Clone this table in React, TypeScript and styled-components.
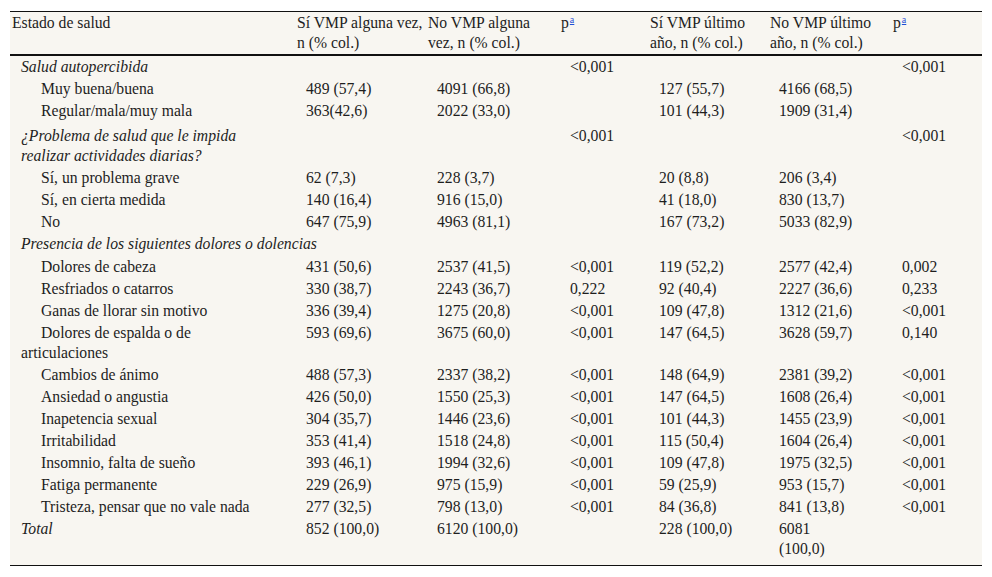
import React from "react";
import styled, { createGlobalStyle } from "styled-components";

const Global = createGlobalStyle`
  html, body { margin: 0; padding: 0; background: #ffffff; }
  body { font-family: "Liberation Serif", "Times New Roman", serif; color: #1e1e1e; }
`;

const Wrapper = styled.div`
  margin: 11px 10px 0 10px;
  background: #f8f6f1;
  border-top: 1px solid #111;
  border-bottom: 1px solid #111;
`;

const Table = styled.table`
  width: 100%;
  table-layout: fixed;
  border-collapse: collapse;
  font-size: 15.7px;
  line-height: 20px;
`;

const Head = styled.thead`
  border-bottom: 2px solid #111;
`;

const HeadCell = styled.th`
  text-align: left;
  font-weight: normal;
  vertical-align: top;
  padding: 1px 0 1px 2px;
  white-space: nowrap;
`;

const Sup = styled.sup`
  font-size: 10px;
  line-height: 0;
  vertical-align: 5px;
  margin-left: 1px;
`;

const RefLink = styled.a`
  color: #1f4fd6;
  text-decoration: underline;
`;

const Row = styled.tr<{ $padTop?: number; $padBottom?: number }>`
  & > td {
    padding-top: ${(p) => 1 + (p.$padTop ?? 0)}px;
    padding-bottom: ${(p) => 1 + (p.$padBottom ?? 0)}px;
  }
`;

const LabelCell = styled.td<{ $sub?: boolean; $italic?: boolean }>`
  vertical-align: top;
  padding-left: 11px;
  text-indent: ${(p) => (p.$sub ? "20px" : "0")};
  font-style: ${(p) => (p.$italic ? "italic" : "normal")};
  white-space: nowrap;
`;

const Cell = styled.td`
  vertical-align: top;
  padding-left: 11px;
  white-space: nowrap;
`;

type Line = {
  label: React.ReactNode;
  kind: "section" | "sub";
  values: string[];
  padTop?: number;
  padBottom?: number;
};

const rows: Line[] = [
  { label: "Salud autopercibida", kind: "section", values: ["", "", "<0,001", "", "", "<0,001"] },
  { label: "Muy buena/buena", kind: "sub", values: ["489 (57,4)", "4091 (66,8)", "", "127 (55,7)", "4166 (68,5)", ""] },
  { label: "Regular/mala/muy mala", kind: "sub", values: ["363(42,6)", "2022 (33,0)", "", "101 (44,3)", "1909 (31,4)", ""] },
  {
    label: (
      <>
        ¿Problema de salud que le impida
        <br />
        realizar actividades diarias?
      </>
    ),
    kind: "section",
    values: ["", "", "<0,001", "", "", "<0,001"],
    padTop: 3,
  },
  { label: "Sí, un problema grave", kind: "sub", values: ["62 (7,3)", "228 (3,7)", "", "20 (8,8)", "206 (3,4)", ""] },
  { label: "Sí, en cierta medida", kind: "sub", values: ["140 (16,4)", "916 (15,0)", "", "41 (18,0)", "830 (13,7)", ""] },
  { label: "No", kind: "sub", values: ["647 (75,9)", "4963 (81,1)", "", "167 (73,2)", "5033 (82,9)", ""] },
  {
    label: "Presencia de los siguientes dolores o dolencias",
    kind: "section",
    values: ["", "", "", "", "", ""],
    padBottom: 1,
  },
  { label: "Dolores de cabeza", kind: "sub", values: ["431 (50,6)", "2537 (41,5)", "<0,001", "119 (52,2)", "2577 (42,4)", "0,002"] },
  { label: "Resfriados o catarros", kind: "sub", values: ["330 (38,7)", "2243 (36,7)", "0,222", "92 (40,4)", "2227 (36,6)", "0,233"] },
  { label: "Ganas de llorar sin motivo", kind: "sub", values: ["336 (39,4)", "1275 (20,8)", "<0,001", "109 (47,8)", "1312 (21,6)", "<0,001"] },
  {
    label: (
      <>
        Dolores de espalda o de
        <br />
        articulaciones
      </>
    ),
    kind: "sub",
    values: ["593 (69,6)", "3675 (60,0)", "<0,001", "147 (64,5)", "3628 (59,7)", "0,140"],
  },
  { label: "Cambios de ánimo", kind: "sub", values: ["488 (57,3)", "2337 (38,2)", "<0,001", "148 (64,9)", "2381 (39,2)", "<0,001"] },
  { label: "Ansiedad o angustia", kind: "sub", values: ["426 (50,0)", "1550 (25,3)", "<0,001", "147 (64,5)", "1608 (26,4)", "<0,001"] },
  { label: "Inapetencia sexual", kind: "sub", values: ["304 (35,7)", "1446 (23,6)", "<0,001", "101 (44,3)", "1455 (23,9)", "<0,001"] },
  { label: "Irritabilidad", kind: "sub", values: ["353 (41,4)", "1518 (24,8)", "<0,001", "115 (50,4)", "1604 (26,4)", "<0,001"] },
  { label: "Insomnio, falta de sueño", kind: "sub", values: ["393 (46,1)", "1994 (32,6)", "<0,001", "109 (47,8)", "1975 (32,5)", "<0,001"] },
  { label: "Fatiga permanente", kind: "sub", values: ["229 (26,9)", "975 (15,9)", "<0,001", "59 (25,9)", "953 (15,7)", "<0,001"] },
  { label: "Tristeza, pensar que no vale nada", kind: "sub", values: ["277 (32,5)", "798 (13,0)", "<0,001", "84 (36,8)", "841 (13,8)", "<0,001"] },
];

const widths = [285, 131, 133, 89, 120, 123, 91];

const P = () => (
  <>
    p
    <Sup>
      <RefLink href="#tblfn1">a</RefLink>
    </Sup>
  </>
);

export default function App() {
  return (
    <>
      <Global />
      <Wrapper>
        <Table>
          <colgroup>
            {widths.map((w, i) => (
              <col key={i} style={{ width: w }} />
            ))}
          </colgroup>
          <Head>
            <tr>
              <HeadCell>Estado de salud</HeadCell>
              <HeadCell>
                Sí VMP alguna vez,
                <br />
                n (% col.)
              </HeadCell>
              <HeadCell>
                No VMP alguna
                <br />
                vez, n (% col.)
              </HeadCell>
              <HeadCell>
                <P />
              </HeadCell>
              <HeadCell>
                Sí VMP último
                <br />
                año, n (% col.)
              </HeadCell>
              <HeadCell>
                No VMP último
                <br />
                año, n (% col.)
              </HeadCell>
              <HeadCell>
                <P />
              </HeadCell>
            </tr>
          </Head>
          <tbody>
            {rows.map((r, i) => (
              <Row key={i} $padTop={r.padTop} $padBottom={r.padBottom}>
                <LabelCell $sub={r.kind === "sub"} $italic={r.kind === "section"}>
                  {r.label}
                </LabelCell>
                {r.values.map((v, j) => (
                  <Cell key={j}>{v}</Cell>
                ))}
              </Row>
            ))}
            <Row $padBottom={5}>
              <LabelCell $italic>Total</LabelCell>
              <Cell>852 (100,0)</Cell>
              <Cell>6120 (100,0)</Cell>
              <Cell></Cell>
              <Cell>228 (100,0)</Cell>
              <Cell>
                6081
                <br />
                (100,0)
              </Cell>
              <Cell></Cell>
            </Row>
          </tbody>
        </Table>
      </Wrapper>
    </>
  );
}
